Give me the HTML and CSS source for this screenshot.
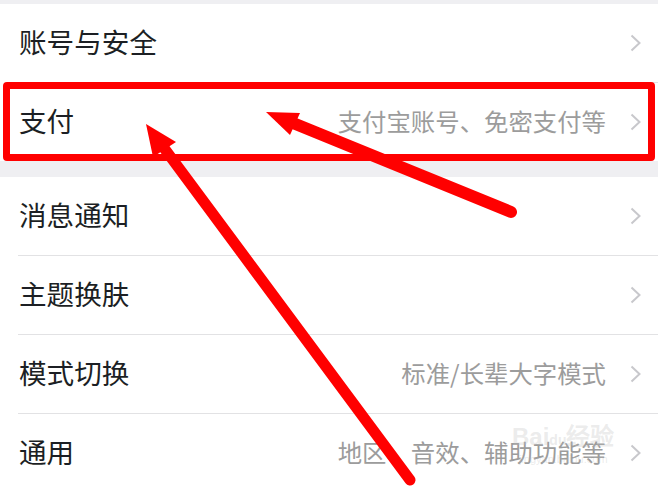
FILE: index.html
```html
<!DOCTYPE html>
<html lang="zh-CN">
<head>
    <meta charset="UTF-8">
    <meta name="viewport" content="width=device-width, initial-scale=1.0">
    <title>设置</title>
    <link rel="stylesheet" href="styles.css">
</head>
<body>
    <div class="page">
        <div class="group group-first">
            <div class="cell">
                <span class="label">账号与安全</span>
                <span class="value"></span>
                <svg class="chevron" width="12" height="18" viewBox="0 0 12 18"><path d="M1.5 1.5 L9.5 9 L1.5 16.5"/></svg>
            </div>
            <div class="cell cell-marked">
                <span class="label">支付</span>
                <span class="value">支付宝账号、免密支付等</span>
                <svg class="chevron" width="12" height="18" viewBox="0 0 12 18"><path d="M1.5 1.5 L9.5 9 L1.5 16.5"/></svg>
            </div>
        </div>

        <div class="group">
            <div class="cell">
                <span class="label">消息通知</span>
                <span class="value"></span>
                <svg class="chevron" width="12" height="18" viewBox="0 0 12 18"><path d="M1.5 1.5 L9.5 9 L1.5 16.5"/></svg>
            </div>
            <div class="cell">
                <span class="label">主题换肤</span>
                <span class="value"></span>
                <svg class="chevron" width="12" height="18" viewBox="0 0 12 18"><path d="M1.5 1.5 L9.5 9 L1.5 16.5"/></svg>
            </div>
            <div class="cell">
                <span class="label">模式切换</span>
                <span class="value">标准/长辈大字模式</span>
                <svg class="chevron" width="12" height="18" viewBox="0 0 12 18"><path d="M1.5 1.5 L9.5 9 L1.5 16.5"/></svg>
            </div>
            <div class="cell">
                <span class="label">通用</span>
                <span class="value">地区、音效、辅助功能等</span>
                <svg class="chevron" width="12" height="18" viewBox="0 0 12 18"><path d="M1.5 1.5 L9.5 9 L1.5 16.5"/></svg>
            </div>
        </div>

        <!-- 水印 -->
        <div class="watermark">
            <span class="wm-logo">Bai<span class="wm-paw">du</span>经验</span>
            <span class="wm-url">jingyan.baidu.com</span>
        </div>

        <!-- 标注箭头 -->
        <svg class="annotations" width="658" height="486" viewBox="0 0 658 486">
            <line x1="164" y1="148" x2="410" y2="480" stroke="#ff0000" stroke-width="11" stroke-linecap="round"/>
            <polygon points="146,124 176,142 153,157" fill="#ff0000"/>
            <line x1="293" y1="123" x2="511" y2="212" stroke="#ff0000" stroke-width="12" stroke-linecap="round"/>
            <polygon points="266,112 300,113 290,135" fill="#ff0000"/>
        </svg>
    </div>
</body>
</html>
```

FILE: styles.css
```css
* {
    margin: 0;
    padding: 0;
    box-sizing: border-box;
}

body {
    font-family: "Noto Sans CJK SC", "Noto Sans", sans-serif;
    background: #efeff2;
    width: 658px;
    height: 486px;
    overflow: hidden;
}

.page {
    position: relative;
    padding-top: 4px;
    height: 486px;
}

.group {
    background: #ffffff;
    padding-left: 18px;
    margin-top: 16px;
}

.group-first {
    margin-top: 0;
}

.cell {
    display: flex;
    align-items: center;
    height: 79px;
    padding-right: 16px;
    padding-bottom: 4px;
    border-top: 1px solid #e2e2e4;
}

.cell:first-child {
    height: 78px;
    border-top: none;
}

.label {
    font-size: 27.6px;
    color: #1c1f24;
    padding-left: 1px;
}

.value {
    flex: 1;
    text-align: right;
    font-size: 24.4px;
    color: #9c9c9c;
    margin-right: 24px;
}

.chevron {
    flex-shrink: 0;
    margin-top: 4px;
}

.chevron path {
    fill: none;
    stroke: #c8c8cc;
    stroke-width: 2;
}

/* 红框标注 */
.cell-marked {
    position: relative;
}

.cell-marked::after {
    content: "";
    position: absolute;
    left: -15px;
    right: 3px;
    top: -1px;
    bottom: 0;
    border: 7px solid #ff0000;
    border-radius: 4px;
}

.annotations {
    position: absolute;
    top: 0;
    left: 0;
    pointer-events: none;
}

.watermark {
    position: absolute;
    left: 512px;
    top: 424px;
    display: flex;
    flex-direction: column;
    align-items: center;
    color: rgba(190, 190, 190, 0.3);
    pointer-events: none;
}

.wm-logo {
    font-family: "Liberation Sans", sans-serif;
    font-size: 24px;
    line-height: 26px;
    font-weight: bold;
}

.wm-paw {
    font-size: 14px;
}

.wm-url {
    font-family: "Liberation Sans", sans-serif;
    font-size: 11px;
    line-height: 12px;
}
```
